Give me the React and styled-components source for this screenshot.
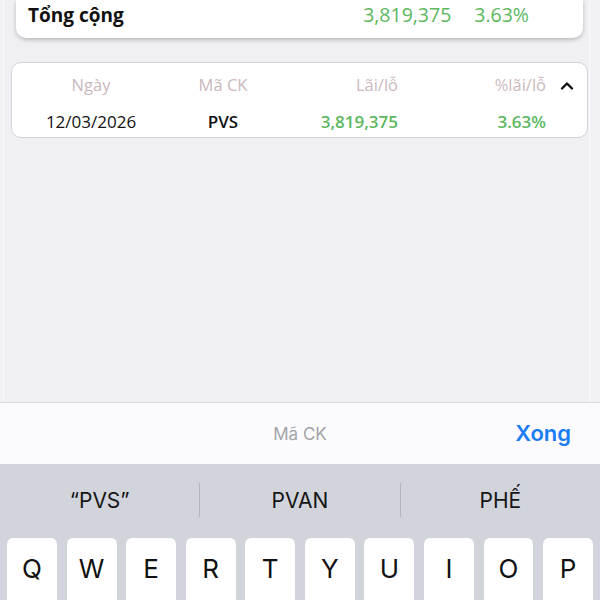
import React from 'react';
import styled, {createGlobalStyle} from 'styled-components';

const GlobalStyle = createGlobalStyle`
    html, body {
        margin: 0;
        padding: 0;
        background: #f2f2f6;
        overflow: hidden;
    }
    * { box-sizing: border-box; }
`

const rows = [
    {date: '12/03/2026', code: 'PVS', pnl: '3,819,375', pct: '3.63%'},
]

const suggestions = ['\u201CPVS\u201D', 'PVAN', 'PHẾ']
const keys = ['Q', 'W', 'E', 'R', 'T', 'Y', 'U', 'I', 'O', 'P']

export default function App() {
    return (
        <>
        <GlobalStyle />
        <Screen>
            <Content>
                <TotalCard>
                    <TotalLabel>Tổng cộng</TotalLabel>
                    <TotalValue>3,819,375</TotalValue>
                    <TotalValue>3.63%</TotalValue>
                </TotalCard>
                <Table>
                    <HeadCell>Ngày</HeadCell>
                    <HeadCell>Mã CK</HeadCell>
                    <HeadCell $right>Lãi/lỗ</HeadCell>
                    <HeadCell $right>%lãi/lỗ</HeadCell>
                    <Toggle>
                        <svg width='14' height='10' viewBox='0 0 14 10'>
                            <polyline points='2,7.5 7,2.5 12,7.5' fill='none' stroke='#111' strokeWidth='2.4' strokeLinecap='round' strokeLinejoin='round' />
                        </svg>
                    </Toggle>
                    {rows.map(r => (
                        <React.Fragment key={r.code}>
                            <Cell>{r.date}</Cell>
                            <Cell $bold>{r.code}</Cell>
                            <Cell $right $green>{r.pnl}</Cell>
                            <Cell $right $green>{r.pct}</Cell>
                            <span />
                        </React.Fragment>
                    ))}
                </Table>
            </Content>
            <Toolbar>
                <FieldName>Mã CK</FieldName>
                <Done>Xong</Done>
            </Toolbar>
            <Keyboard>
                <Suggestions>
                    {suggestions.map((s, i) => (
                        <Suggestion key={s} $first={i === 0}>{s}</Suggestion>
                    ))}
                </Suggestions>
                <KeyRow>
                    {keys.map(k => <Key key={k}>{k}</Key>)}
                </KeyRow>
            </Keyboard>
        </Screen>
        </>
    )
}

const Screen = styled.div`
    width: 600px;
    height: 600px;
    display: flex;
    flex-direction: column;
    background-color: #f2f2f6;
`

const Content = styled.div`
    flex: 1;
    margin: 0 10px 0 3px;
    padding: 0 1px 0 7px;
    background-color: #efeff4;
    border-left: 1px solid #fafafc;
    border-right: 1px solid #fafafc;
    display: flex;
    flex-direction: column;
    font-family: "Open Sans", "Noto Sans", sans-serif;
`

const TotalCard = styled.div`
    height: 38px;
    margin: 0 5px 24px 5px;
    padding: 3px 54px 12px 12px;
    display: flex;
    align-items: center;
    gap: 23px;
    background-color: #fff;
    border-radius: 0 0 10px 10px;
    box-shadow: 0 2px 4px rgba(0, 0, 0, 0.22);
`

const TotalLabel = styled.div`
    flex: 1;
    font-size: 19px;
    font-weight: 700;
    color: #111;
`

const TotalValue = styled.div`
    font-size: 19.5px;
    font-weight: 500;
    color: #5cb85f;
`

const Table = styled.div`
    display: grid;
    grid-template-columns: 158px 106px 122px 148px 1fr;
    grid-template-rows: 43px 31px;
    align-items: center;
    background-color: #fff;
    border: 1px solid #d2d2d8;
    border-radius: 10px;
`

const HeadCell = styled.div`
    font-size: 16.5px;
    color: #cbb8bd;
    text-align: ${p => p.$right ? 'right' : 'center'};
`

const Cell = styled.div`
    font-size: 17px;
    font-weight: ${p => p.$green || p.$bold ? 600 : 400};
    color: ${p => p.$green ? '#5cb85f' : '#111'};
    text-align: ${p => p.$right ? 'right' : 'center'};
`

const Toggle = styled.div`
    display: flex;
    justify-content: center;
    padding: 2px 0 0 0;
`

const Toolbar = styled.div`
    height: 62px;
    position: relative;
    display: flex;
    align-items: center;
    justify-content: center;
    background-color: #fbfbfd;
    border-top: 1px solid #d9d9de;
    font-family: Inter, "Liberation Sans", sans-serif;
`

const FieldName = styled.div`
    font-size: 17px;
    color: #a3a3a8;
`

const Done = styled.div`
    position: absolute;
    right: 29px;
    top: 17px;
    font-size: 22px;
    font-weight: 600;
    color: #1b7df5;
`

const Keyboard = styled.div`
    height: 136px;
    background-color: #d1d4da;
    font-family: Inter, "Liberation Sans", sans-serif;
`

const Suggestions = styled.div`
    height: 74px;
    display: flex;
    align-items: center;
    padding-bottom: 2px;
`

const Suggestion = styled.div`
    flex: 1;
    height: 34px;
    display: flex;
    align-items: center;
    justify-content: center;
    font-size: 21px;
    color: #151515;
    border-left: ${p => p.$first ? 'none' : '1px solid #b3b6bc'};
`

const KeyRow = styled.div`
    display: flex;
    gap: 9.6px;
    padding: 0 7px;
`

const Key = styled.div`
    flex: 1;
    height: 70px;
    padding-top: 15px;
    display: flex;
    justify-content: center;
    align-items: flex-start;
    background-color: #fff;
    border-radius: 6px;
    font-size: 26px;
    color: #111;
    box-shadow: 0 1px 0 #8a8c90;
`
